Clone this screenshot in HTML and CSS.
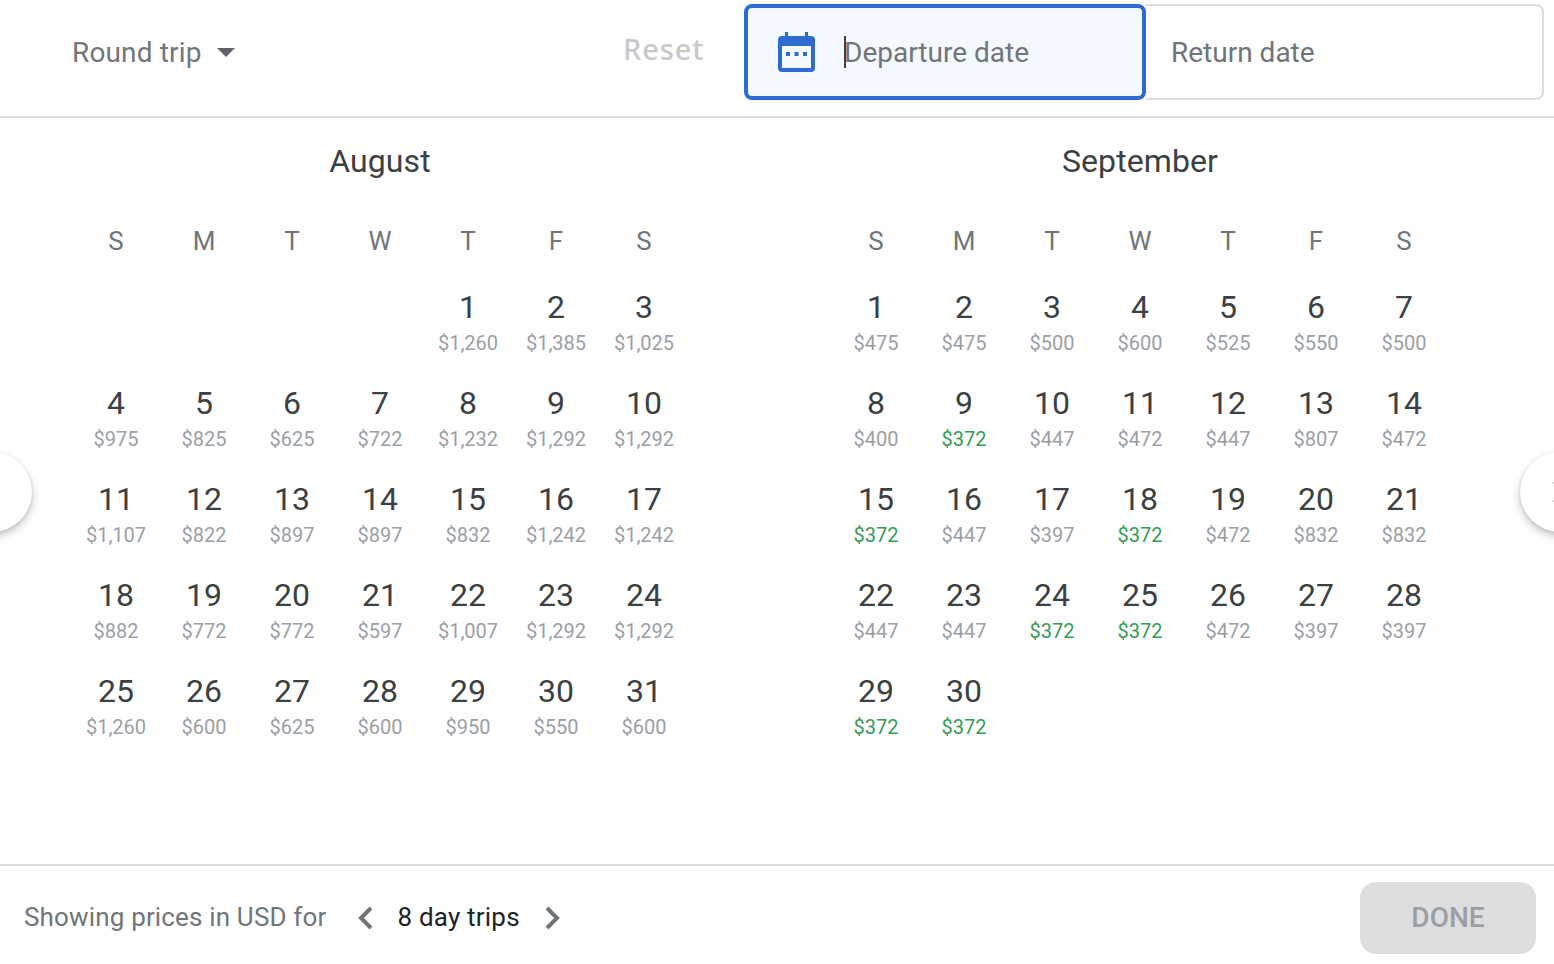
FILE: index.html
```html
<!DOCTYPE html>
<html lang="en">
<head>
<meta charset="utf-8">
<title>Date picker</title>
<link rel="stylesheet" href="styles.css">
</head>
<body>
<div class="picker">
  <header class="top">
    <div class="trip-type"><span>Round trip</span><svg class="caret" width="18" height="9" viewBox="0 0 18 9"><path d="M0 0h18L9 9z"/></svg></div>
    <div class="reset">Reset</div>
    <div class="dates">
      <div class="date-field active">
        <svg class="cal" width="37" height="40" viewBox="0 0 37 40"><path fill-rule="evenodd" d="M7 0h3v4h17V0h3v4h3a4 4 0 0 1 4 4v28a4 4 0 0 1-4 4H4a4 4 0 0 1-4-4V8a4 4 0 0 1 4-4h3zM4 14v22h29V14z"/><path d="M8 20h4v4H8zM16.5 20h4v4h-4zM25 20h4v4h-4z"/></svg>
        <span class="cursor"></span><span>Departure date</span>
      </div>
      <div class="date-field return"><span>Return date</span></div>
    </div>
  </header>
  <main class="months">
    <section class="month">
      <h2>August</h2>
      <div class="grid">
        <div class="wd">S</div><div class="wd">M</div><div class="wd">T</div><div class="wd">W</div><div class="wd">T</div><div class="wd">F</div><div class="wd">S</div>
        <div class="day thu"><b>1</b><i>$1,260</i></div><div class="day"><b>2</b><i>$1,385</i></div><div class="day"><b>3</b><i>$1,025</i></div>
        <div class="day"><b>4</b><i>$975</i></div><div class="day"><b>5</b><i>$825</i></div><div class="day"><b>6</b><i>$625</i></div><div class="day"><b>7</b><i>$722</i></div><div class="day"><b>8</b><i>$1,232</i></div><div class="day"><b>9</b><i>$1,292</i></div><div class="day"><b>10</b><i>$1,292</i></div>
        <div class="day"><b>11</b><i>$1,107</i></div><div class="day"><b>12</b><i>$822</i></div><div class="day"><b>13</b><i>$897</i></div><div class="day"><b>14</b><i>$897</i></div><div class="day"><b>15</b><i>$832</i></div><div class="day"><b>16</b><i>$1,242</i></div><div class="day"><b>17</b><i>$1,242</i></div>
        <div class="day"><b>18</b><i>$882</i></div><div class="day"><b>19</b><i>$772</i></div><div class="day"><b>20</b><i>$772</i></div><div class="day"><b>21</b><i>$597</i></div><div class="day"><b>22</b><i>$1,007</i></div><div class="day"><b>23</b><i>$1,292</i></div><div class="day"><b>24</b><i>$1,292</i></div>
        <div class="day"><b>25</b><i>$1,260</i></div><div class="day"><b>26</b><i>$600</i></div><div class="day"><b>27</b><i>$625</i></div><div class="day"><b>28</b><i>$600</i></div><div class="day"><b>29</b><i>$950</i></div><div class="day"><b>30</b><i>$550</i></div><div class="day"><b>31</b><i>$600</i></div>
      </div>
    </section>
    <section class="month">
      <h2>September</h2>
      <div class="grid">
        <div class="wd">S</div><div class="wd">M</div><div class="wd">T</div><div class="wd">W</div><div class="wd">T</div><div class="wd">F</div><div class="wd">S</div>
        <div class="day"><b>1</b><i>$475</i></div><div class="day"><b>2</b><i>$475</i></div><div class="day"><b>3</b><i>$500</i></div><div class="day"><b>4</b><i>$600</i></div><div class="day"><b>5</b><i>$525</i></div><div class="day"><b>6</b><i>$550</i></div><div class="day"><b>7</b><i>$500</i></div>
        <div class="day"><b>8</b><i>$400</i></div><div class="day low"><b>9</b><i>$372</i></div><div class="day"><b>10</b><i>$447</i></div><div class="day"><b>11</b><i>$472</i></div><div class="day"><b>12</b><i>$447</i></div><div class="day"><b>13</b><i>$807</i></div><div class="day"><b>14</b><i>$472</i></div>
        <div class="day low"><b>15</b><i>$372</i></div><div class="day"><b>16</b><i>$447</i></div><div class="day"><b>17</b><i>$397</i></div><div class="day low"><b>18</b><i>$372</i></div><div class="day"><b>19</b><i>$472</i></div><div class="day"><b>20</b><i>$832</i></div><div class="day"><b>21</b><i>$832</i></div>
        <div class="day"><b>22</b><i>$447</i></div><div class="day"><b>23</b><i>$447</i></div><div class="day low"><b>24</b><i>$372</i></div><div class="day low"><b>25</b><i>$372</i></div><div class="day"><b>26</b><i>$472</i></div><div class="day"><b>27</b><i>$397</i></div><div class="day"><b>28</b><i>$397</i></div>
        <div class="day low"><b>29</b><i>$372</i></div><div class="day low"><b>30</b><i>$372</i></div>
      </div>
    </section>
    <div class="nav prev"></div>
    <div class="nav next"><svg width="12" height="22" viewBox="0 0 12 22"><path d="M1 1l10 10L1 21" fill="none" stroke="#70757a" stroke-width="3"/></svg></div>
  </main>
  <footer class="bottom">
    <span class="note">Showing prices in USD for</span>
    <svg class="chev first" width="16" height="24" viewBox="0 0 16 24"><path d="M14 2L4 12l10 10" fill="none" stroke="#70757a" stroke-width="4"/></svg>
    <span class="trips">8 day trips</span>
    <svg class="chev last" width="16" height="24" viewBox="0 0 16 24"><path d="M2 2l10 10L2 22" fill="none" stroke="#70757a" stroke-width="4"/></svg>
    <div class="done">DONE</div>
  </footer>
</div>
</body>
</html>
```
FILE: styles.css
```css
* { box-sizing: border-box; }
html, body { margin: 0; height: 100%; background: #fff; overflow: hidden; }
body { font-family: Roboto, "Liberation Sans", sans-serif; color: #3c4043; }
.picker { width: 1554px; height: 964px; display: flex; flex-direction: column; }

.top { height: 118px; flex: none; display: flex; align-items: flex-start; border-bottom: 2px solid #dadce0; padding: 4px 10px 0 72px; }
.trip-type { display: flex; align-items: center; gap: 15px; height: 96px; font-size: 28px; letter-spacing: .15px; color: #70757a; width: 551px; flex: none; }
.caret { fill: #5f6368; margin-top: 1px; }
.reset { width: 121px; flex: none; height: 90px; line-height: 90px; font-family: "Noto Sans", sans-serif; font-size: 29px; letter-spacing: .9px; color: #c6c8ca; font-weight: 500; }
.dates { display: flex; flex: 1; height: 96px; }
.date-field { display: flex; align-items: center; font-size: 28px; color: #70757a; height: 96px; }
.date-field.active { width: 402px; flex: none; background: #f4f8ff; border: 4px solid #2d6bd2; border-radius: 8px; padding-left: 30px; position: relative; z-index: 1; }
.cal { fill: #2d6bd2; flex: none; margin-right: 29px; }
.cursor { width: 2px; height: 32px; background: #3c4043; margin-right: -2px; }
.date-field.return { flex: 1; border: 2px solid #dadce0; border-left: 0; border-radius: 0 8px 8px 0; padding-left: 25px; }

.months { flex: none; height: 748px; position: relative; display: flex; padding-left: 72px; gap: 144px; overflow: hidden; }
.month { width: 616px; flex: none; }
h2 { margin: 0; height: 87px; padding-top: 21px; line-height: 44px; text-align: center; font-size: 32px; letter-spacing: .1px; font-weight: 400; color: #3c4043; }
.grid { display: grid; grid-template-columns: repeat(7, 88px); grid-template-rows: 78px; grid-auto-rows: 96px; }
.wd { text-align: center; font-size: 26px; color: #70757a; height: 72px; line-height: 72px; }
.day { display: flex; flex-direction: column; align-items: center; padding-top: 4px; }
.thu { grid-column-start: 5; }
.day b { font-weight: 400; font-size: 32px; line-height: 40px; color: #3c4043; }
.day i { font-style: normal; font-size: 20px; line-height: 28px; margin-top: 2px; color: #9aa0a6; }
.low i { color: #379a5b; }

.nav { position: absolute; top: 334px; width: 80px; height: 80px; border-radius: 50%; background: #fff; box-shadow: 0 4px 8px rgba(60,64,67,.3), 0 1px 3px rgba(60,64,67,.15); }
.prev { left: -48px; }
.next { left: 1520px; padding: 29px 0 0 33px; }

.bottom { flex: 1; display: flex; align-items: center; border-top: 2px solid #dadce0; margin-top: -2px; padding: 6px 18px 0 24px; font-size: 26px; }
.note { color: #70757a; letter-spacing: .16px; margin-top: -2px; }
.chev { flex: none; margin-left: 31px; }
.trips { margin-left: 24px; color: #202124; letter-spacing: .2px; margin-top: -2px; margin-right: -7px; }
.chev.last { margin-left: 32px; }
.done { margin-left: auto; width: 176px; height: 72px; border-radius: 16px; background: #dcdee0; color: #9c9fa2; font-size: 28px; font-weight: 500; text-align: center; line-height: 72px; }
```
